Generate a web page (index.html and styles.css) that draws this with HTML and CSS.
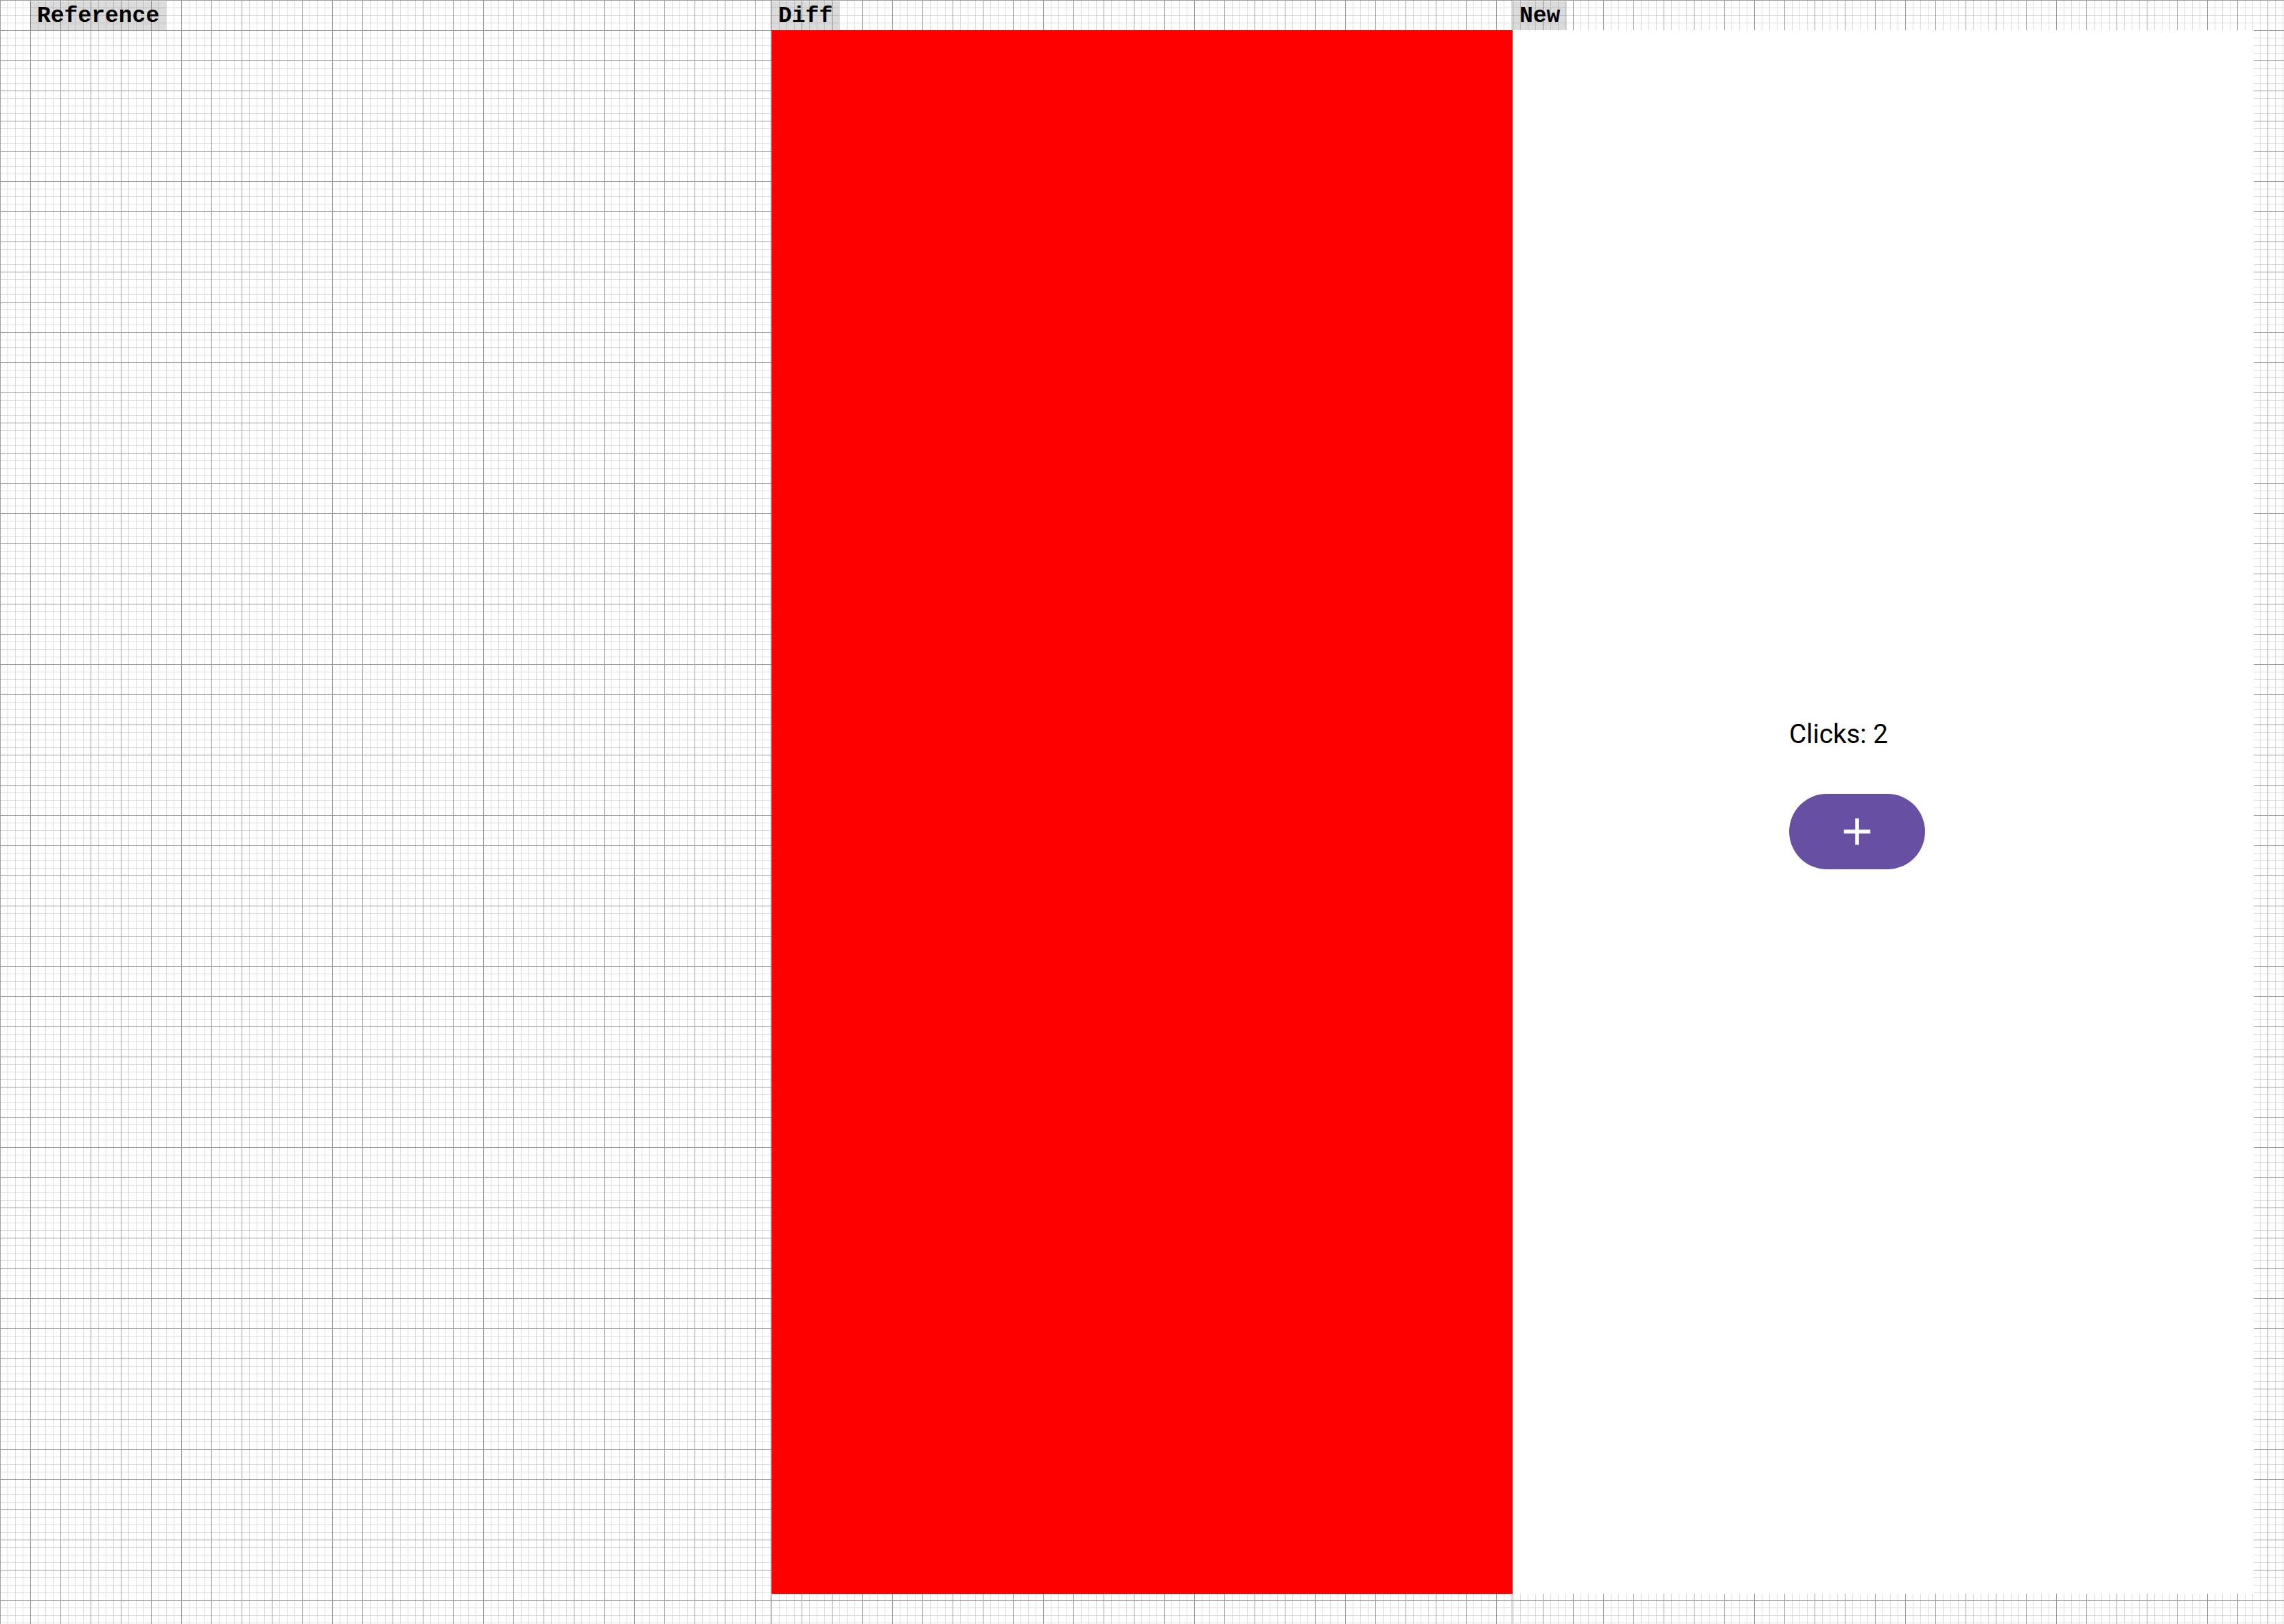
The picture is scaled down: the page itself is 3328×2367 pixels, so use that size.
FILE: index.html
```html
<!DOCTYPE html>
<html lang="en">
<head>
<meta charset="utf-8">
<title>Reference / Diff / New</title>
<link rel="stylesheet" href="styles.css">
</head>
<body>
<div class="board">
  <div class="gutter grid"></div>
  <section class="col grid">
    <div class="col-head"><span class="label">Reference</span></div>
    <div class="panel panel-ref"></div>
  </section>
  <section class="col grid">
    <div class="col-head"><span class="label">Diff</span></div>
    <div class="panel panel-diff"></div>
  </section>
  <section class="col grid">
    <div class="col-head"><span class="label">New</span></div>
    <div class="panel panel-new">
      <div class="app">
        <p class="count">Clicks: 2</p>
        <button class="fab" type="button" aria-label="Add">
          <svg class="fab-icon" viewBox="0 0 24 24" width="66" height="66" aria-hidden="true">
            <path d="M19 13h-6v6h-2v-6H5v-2h6V5h2v6h6v2z" fill="#ffffff"/>
          </svg>
        </button>
      </div>
    </div>
  </section>
</div>
</body>
</html>
```

FILE: styles.css
```css
html, body {
  margin: 0;
  padding: 0;
}

body {
  width: 3328px;
  height: 2367px;
  overflow: hidden;
  background: #ffffff;
}

.grid {
  background-color: #ffffff;
  background-image:
    linear-gradient(to right, #9c9c9c 1px, transparent 1px),
    linear-gradient(to bottom, #9c9c9c 1px, transparent 1px),
    linear-gradient(to right, #dcdcdc 1px, transparent 1px),
    linear-gradient(to bottom, #dcdcdc 1px, transparent 1px);
  background-size: 44px 44px, 44px 44px, 11px 11px, 11px 11px;
}

.board {
  display: grid;
  grid-template-columns: 44px 1080px 1080px 1124px;
  height: 2367px;
}

.col {
  display: flex;
  flex-direction: column;
}

.col-head {
  height: 44px;
  display: flex;
  align-items: flex-end;
}

.label {
  display: block;
  height: 42px;
  line-height: 44px;
  padding: 0 10px;
  background: rgba(0, 0, 0, 0.14);
  font-family: "Courier New", "Nimbus Mono PS", "Nimbus Mono L", "FreeMono", Courier, "Liberation Mono", monospace;
  font-weight: bold;
  font-size: 33px;
  color: #000000;
  overflow: hidden;
}

.panel {
  width: 1080px;
  height: 2279px;
}

.panel-ref {
  background: transparent;
}

.panel-diff {
  background: #ff0000;
}

.panel-new {
  background: #ffffff;
  box-sizing: border-box;
  padding: 1003px 0 0 403px;
}

.app {
  display: flex;
  flex-direction: column;
  align-items: flex-start;
}

.count {
  margin: 0;
  font-family: Roboto, "Noto Sans", sans-serif;
  font-size: 38.5px;
  line-height: 45px;
  color: #000000;
}

.fab {
  margin-top: 65px;
  width: 198px;
  height: 110px;
  border: 0;
  padding: 0;
  border-radius: 55px;
  background: #6750a4;
  display: flex;
  align-items: center;
  justify-content: center;
  cursor: pointer;
}

.fab-icon {
  display: block;
}
```
